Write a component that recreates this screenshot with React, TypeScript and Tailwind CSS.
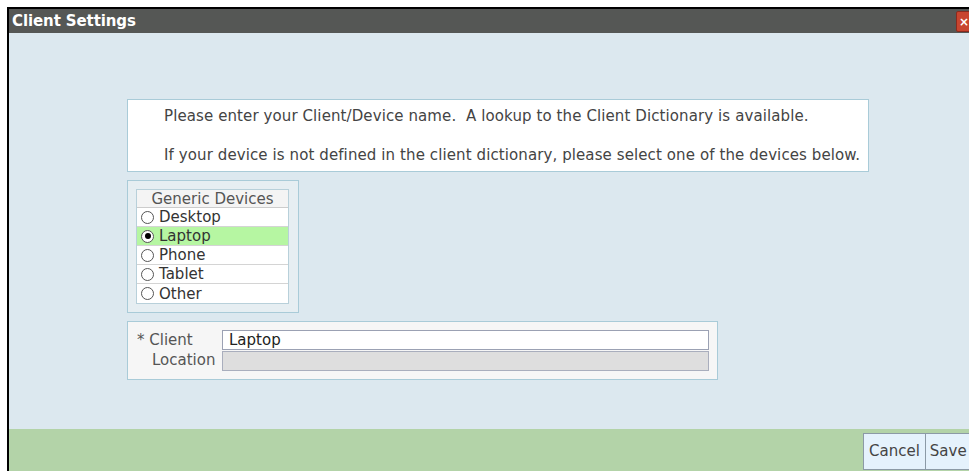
import { useState } from 'react'

const devices = ['Desktop', 'Laptop', 'Phone', 'Tablet', 'Other']

function Radio({ checked }: { checked: boolean }) {
  return (
    <span className="ml-[1px] mr-[5px] flex h-[13px] w-[13px] items-center justify-center rounded-full border border-[#555] bg-white">
      {checked ? <span className="h-[6px] w-[6px] rounded-full bg-black" /> : null}
    </span>
  )
}

export default function App() {
  const [device, setDevice] = useState('Laptop')

  return (
    <div
      className="h-[471px] w-[969px] overflow-hidden bg-white pl-[7px] pt-[7px]"
      style={{ fontFamily: 'Verdana, "DejaVu Sans", sans-serif' }}
    >
      <div className="flex h-[464px] w-[980px] flex-col border-l-2 border-t-2 border-black">
        {/* title bar */}
        <header className="flex h-[24px] shrink-0 items-center justify-between bg-[#555755] pl-[3px]">
          <span className="text-[15px] font-bold tracking-[-0.1px] text-white">Client Settings</span>
          <button className="mr-[9px] mt-[1px] flex h-[21px] w-[22px] items-center justify-start rounded-[2px] border border-[#8a2a1e] bg-[#c8452f] pl-[2px] text-[12px] font-bold leading-none text-white">
            ×
          </button>
        </header>

        {/* body */}
        <main className="flex flex-1 flex-col items-start gap-[8px] bg-[#dce8ef] pl-[118px] pt-[66px]">
          <div className="flex h-[73px] w-[742px] flex-col justify-center gap-[19px] border border-[#a9cbd8] bg-white pl-[36px] text-[15px] leading-[20px] tracking-[0.1px] text-[#444]">
            <p>Please enter your Client/Device name.&nbsp; A lookup to the Client Dictionary is available.</p>
            <p>If your device is not defined in the client dictionary, please select one of the devices below.</p>
          </div>

          <div className="h-[133px] w-[172px] border border-[#a9cbd8] bg-[#e6eef2] p-[8px]">
            <div className="w-[153px] border border-[#b8d0da] bg-white text-[15px] leading-[18px] text-[#333]">
              <div className="h-[18px] border-b border-[#ccc] bg-[#f4f4f4] text-center text-[#555]">Generic Devices</div>
              {devices.map((d) => (
                <div
                  key={d}
                  onClick={() => setDevice(d)}
                  className={
                    d === device
                      ? 'flex h-[19px] items-center border-b border-[#d4d4d4] bg-[#b6f6a2] pl-[3px] last:border-b-0'
                      : 'flex h-[19px] items-center border-b border-[#d4d4d4] pl-[3px] last:border-b-0'
                  }
                >
                  <Radio checked={d === device} />
                  <span>{d}</span>
                </div>
              ))}
            </div>
          </div>

          <div className="flex h-[59px] w-[591px] gap-[7px] border border-[#a9cbd8] bg-[#f6f6f6] pl-[9px] pt-[8px] text-[15px] text-[#555]">
            <div className="flex w-[78px] flex-col leading-[20px]">
              <span>* Client</span>
              <span className="pl-[15px]">Location</span>
            </div>
            <div className="flex flex-col gap-[1px]">
              <div className="h-[20px] w-[487px] border border-[#9ba1b3] bg-white pl-[6px] leading-[18px] text-[#222]">{device}</div>
              <div className="h-[20px] w-[487px] border border-[#a9aebd] bg-[#dedede]" />
            </div>
          </div>
        </main>

        {/* footer */}
        <footer className="flex h-[42px] shrink-0 justify-start bg-[#b3d3a8] pl-[854px] pt-[4px]">
          <div className="flex h-[37px] text-[15px] text-[#444]">
            <button className="border border-[#8c9aa6] bg-[#e5f2fc] px-[5px]">Cancel</button>
            <button className="border border-l-0 border-[#8c9aa6] bg-[#e5f2fc] px-[4px]">Save</button>
          </div>
        </footer>
      </div>
    </div>
  )
}
